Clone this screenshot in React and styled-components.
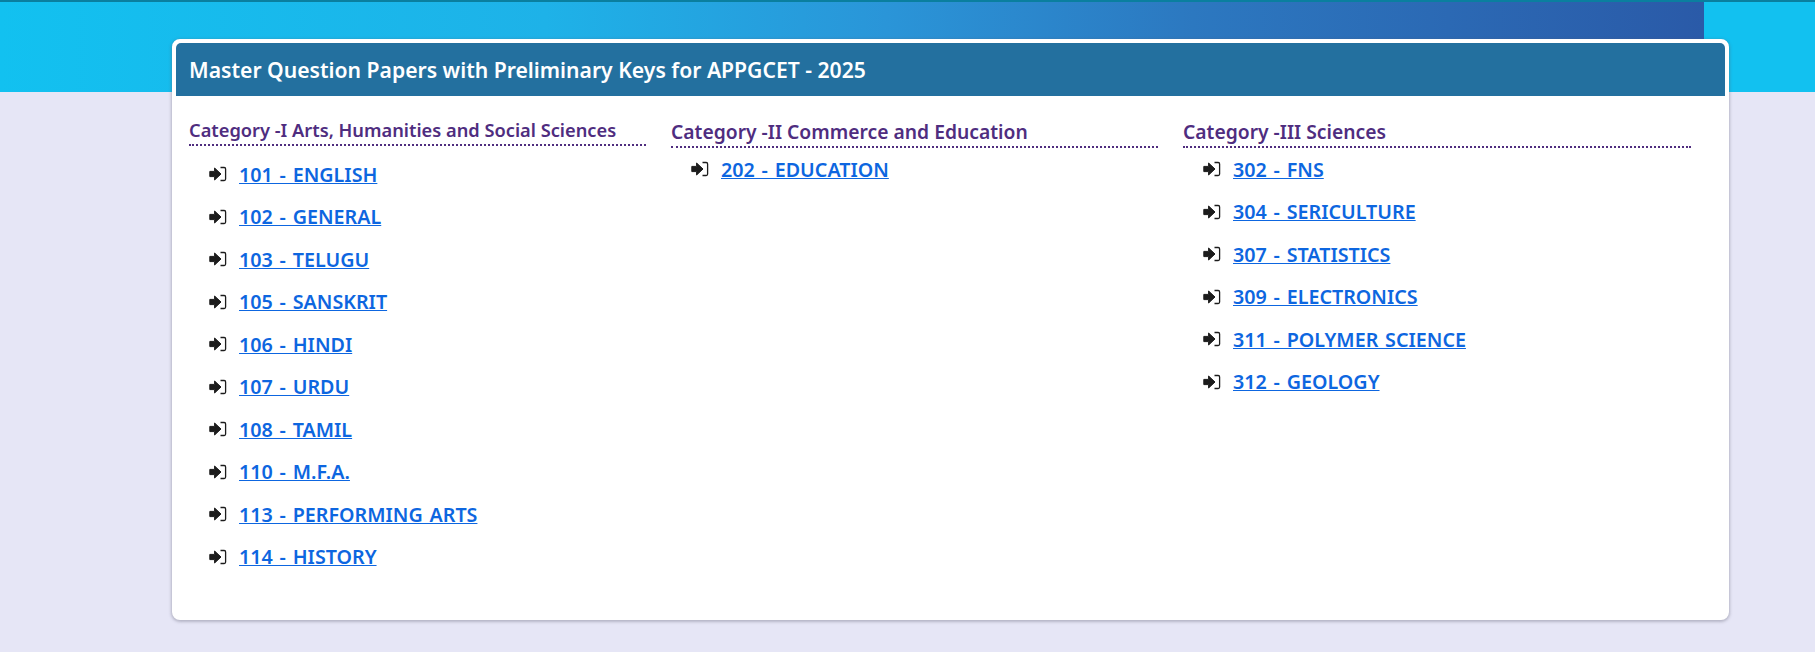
import React from "react";
import styled, { createGlobalStyle } from "styled-components";

const GlobalStyle = createGlobalStyle`
  html, body {
    margin: 0;
    padding: 0;
    background: #e6e6f6;
    font-family: "Noto Sans", "Open Sans", sans-serif;
  }
`;

const Page = styled.div`
  width: 1815px;
  height: 652px;
  overflow: hidden;
`;
const Banner = styled.div`
  display: flex;
  height: 90px;
  border-top: 2px solid #0a7f9f;
  background: #12c1f0;
`;
const BannerFill = styled.div`
  width: 1704px;
  height: 100%;
  background: linear-gradient(90deg, #12c1f0 0%, #1eb2e8 32%, #2a95d8 52%, #2c78c0 70%, #2a5aa8 100%);
`;
const Card = styled.div`
  box-sizing: border-box;
  width: 1557px;
  height: 581px;
  margin: -53px 0 0 172px;
  position: relative;
  border: 4px solid #fff;
  border-radius: 8px;
  background: #fff;
  box-shadow: 0 1px 3px 1px rgba(90, 90, 110, 0.35);
`;
const CardHeader = styled.h1`
  margin: 0;
  height: 53px;
  padding-left: 13px;
  border-radius: 5px 5px 0 0;
  background: #23709f;
  color: #fff;
  font-size: 21.15px;
  font-weight: 600;
  line-height: 54px;
`;
const Columns = styled.div`
  display: flex;
  padding: 21px 0 0 13px;
`;
const Column = styled.section`
  width: ${({ $width }) => $width}px;
  margin-right: ${({ $gap }) => $gap}px;
`;
const CategoryTitle = styled.h2`
  margin: ${({ $top }) => $top}px 0 0;
  height: 27px;
  border-bottom: 2px dotted #4f2d7f;
  color: #4f2d7f;
  font-size: ${({ $size }) => $size}px;
  font-weight: 600;
  line-height: 26px;
  white-space: nowrap;
`;
const PaperList = styled.ul`
  margin: ${({ $top }) => $top}px 0 0;
  padding: 0;
  list-style: none;
`;
const PaperItem = styled.li`
  display: flex;
  align-items: center;
  height: 42.5px;
  padding-left: 20px;
`;
const ArrowIcon = styled.svg`
  width: 18px;
  height: 16px;
  margin-right: 12px;
  flex: none;
`;
const PaperLink = styled.a`
  color: #0d66e0;
  font-size: 19.7px;
  font-weight: 600;
  word-spacing: 1.7px;
  text-decoration: underline;
  white-space: nowrap;
`;

const categories = [
  {
    title: "Category -I Arts, Humanities and Social Sciences",
    size: 18.25,
    width: 457,
    gap: 25,
    titleTop: 0,
    listTop: 7,
    papers: [
      "101 - ENGLISH",
      "102 - GENERAL",
      "103 - TELUGU",
      "105 - SANSKRIT",
      "106 - HINDI",
      "107 - URDU",
      "108 - TAMIL",
      "110 - M.F.A.",
      "113 - PERFORMING ARTS",
      "114 - HISTORY",
    ],
  },
  {
    title: "Category -II Commerce and Education",
    size: 19.3,
    width: 487,
    gap: 25,
    titleTop: 2,
    listTop: 0,
    papers: ["202 - EDUCATION"],
  },
  {
    title: "Category -III Sciences",
    size: 19.3,
    width: 508,
    gap: 0,
    titleTop: 2,
    listTop: 0,
    papers: [
      "302 - FNS",
      "304 - SERICULTURE",
      "307 - STATISTICS",
      "309 - ELECTRONICS",
      "311 - POLYMER SCIENCE",
      "312 - GEOLOGY",
    ],
  },
];

const LoginArrow = () => (
  <ArrowIcon viewBox="0 0 18 16" aria-hidden="true">
    <path
      d="M0.8 5.4H5.6V2L12 8L5.6 14V10.6H0.8Z"
      fill="#1c1c1c"
      stroke="#1c1c1c"
      strokeWidth="1"
      strokeLinejoin="round"
    />
    <path
      d="M11.5 1.5H15.2Q16.6 1.5 16.6 3V13Q16.6 14.5 15.2 14.5H11.5"
      fill="none"
      stroke="#1c1c1c"
      strokeWidth="1.3"
    />
  </ArrowIcon>
);

const App = () => (
  <Page>
    <GlobalStyle />
    <Banner>
      <BannerFill />
    </Banner>
    <Card>
      <CardHeader>Master Question Papers with Preliminary Keys for APPGCET - 2025</CardHeader>
      <Columns>
        {categories.map((category) => (
          <Column key={category.title} $width={category.width} $gap={category.gap}>
            <CategoryTitle $top={category.titleTop} $size={category.size}>
              {category.title}
            </CategoryTitle>
            <PaperList $top={category.listTop}>
              {category.papers.map((paper) => (
                <PaperItem key={paper}>
                  <LoginArrow />
                  <PaperLink href="#">{paper}</PaperLink>
                </PaperItem>
              ))}
            </PaperList>
          </Column>
        ))}
      </Columns>
    </Card>
  </Page>
);

export default App;
